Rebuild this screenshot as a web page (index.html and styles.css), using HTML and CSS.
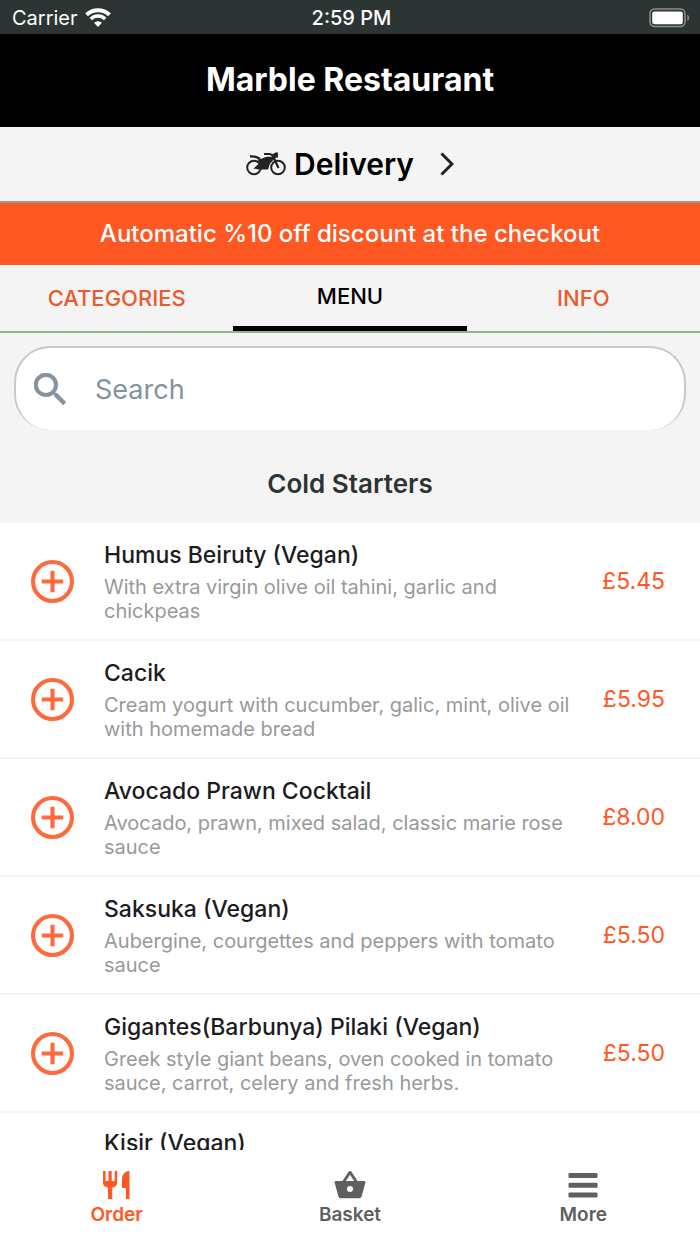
FILE: index.html
```html
<!DOCTYPE html>
<html lang="en">
<head>
<meta charset="utf-8">
<meta name="viewport" content="width=device-width, initial-scale=1">
<title>Marble Restaurant</title>
<link rel="stylesheet" href="styles.css">
</head>
<body>
<div class="app">
  <div class="status">
    <div class="status-left">
      <span>Carrier</span>
      <svg class="wifi" viewBox="0 0 26 19" aria-hidden="true">
        <path d="M1.5 6.8a16.500 16.500 0 0 1 23 0" fill="none" stroke="#fff" stroke-width="4"/>
        <path d="M5.800 11a10.300 10.300 0 0 1 14.400 0" fill="none" stroke="#fff" stroke-width="3.400"/>
        <path d="M13 19l-4-4.200a5.800 5.800 0 0 1 8 0z" fill="#fff"/>
      </svg>
    </div>
    <span class="status-time">2:59 PM</span>
    <div class="status-right">
      <svg class="battery" viewBox="0 0 42 20" aria-hidden="true">
        <rect x="1" y="1" width="35" height="17.500" rx="4.500" fill="none" stroke="#89908e" stroke-width="1.500"/>
        <rect x="3.200" y="3.400" width="30.600" height="12.800" rx="2.200" fill="#fff"/>
        <path d="M38.300 6.800c2.600 1 2.600 5 0 6z" fill="#89908e"/>
      </svg>
    </div>
  </div>
  <header class="header"><h1>Marble Restaurant</h1></header>
  <button class="delivery" type="button">
    <svg class="bike" viewBox="0 0 40 24" aria-hidden="true">
      <g fill="none" stroke="#222" stroke-width="2">
        <circle cx="8" cy="15.500" r="6.800"/><circle cx="32" cy="15.500" r="6.800"/>
        <path d="M18 2h5c2.500 0 3.500 1 4.500 3l5 11" stroke-width="2.200"/>
        <path d="M4 4.500c4-.5 7 .3 10 2.500" stroke-width="2.400"/>
      </g>
      <path d="M7.500 16.500l6-5.500-2-3.500c3.500 0 4.500-1.500 7.500-2.300 3-.6 5-.3 8-.2l1 2.500-4 4-2 6H13zM26 2.500l3.500-2H32v5l-4 .5z" fill="#222"/>
    </svg>
    <span>Delivery</span>
    <svg class="chevron" viewBox="0 0 14 24" aria-hidden="true"><path d="M1.500 1.500L12 12 1.500 22.500" fill="none" stroke="#222" stroke-width="3"/></svg>
  </button>
  <p class="promo">Automatic %10 off discount at the checkout</p>
  <nav class="tabs">
    <button class="tab" type="button">CATEGORIES</button>
    <button class="tab tab-active" type="button">MENU</button>
    <button class="tab" type="button">INFO</button>
  </nav>
  <main class="content">
    <label class="search">
      <svg class="search-icon" viewBox="3 3 17.500 17.500" aria-hidden="true"><path fill="#8492a0" stroke="#8492a0" stroke-width=".3" d="M15.500 14h-.79l-.28-.27A6.470 6.470 0 0 0 16 9.500 6.500 6.500 0 1 0 9.500 16c1.610 0 3.090-.59 4.230-1.570l.27.28v.79l5 4.990L20.490 19l-4.990-5zm-6 0C7.010 14 5 11.990 5 9.500S7.010 5 9.500 5 14 7.010 14 9.500 11.990 14 9.500 14z"/></svg>
      <input class="search-input" type="text" placeholder="Search" aria-label="Search">
    </label>
    <h2 class="section-title">Cold Starters</h2>
    <ul class="menu">
      <li class="item">
        <button class="add" type="button" aria-label="Add Humus Beiruty"><svg viewBox="0 0 42 42"><circle cx="21" cy="21" r="19"/><path d="M21 10.500v21M10.500 21h21"/></svg></button>
        <div class="info"><h3>Humus Beiruty (Vegan)</h3><p>With extra virgin olive oil tahini, garlic and chickpeas</p></div>
        <span class="price">£5.45</span>
      </li>
      <li class="item">
        <button class="add" type="button" aria-label="Add Cacik"><svg viewBox="0 0 42 42"><circle cx="21" cy="21" r="19"/><path d="M21 10.500v21M10.500 21h21"/></svg></button>
        <div class="info"><h3>Cacik</h3><p>Cream yogurt with cucumber, galic, mint, olive oil with homemade bread</p></div>
        <span class="price">£5.95</span>
      </li>
      <li class="item">
        <button class="add" type="button" aria-label="Add Avocado Prawn Cocktail"><svg viewBox="0 0 42 42"><circle cx="21" cy="21" r="19"/><path d="M21 10.500v21M10.500 21h21"/></svg></button>
        <div class="info"><h3>Avocado Prawn Cocktail</h3><p>Avocado, prawn, mixed salad, classic marie rose sauce</p></div>
        <span class="price">£8.00</span>
      </li>
      <li class="item">
        <button class="add" type="button" aria-label="Add Saksuka"><svg viewBox="0 0 42 42"><circle cx="21" cy="21" r="19"/><path d="M21 10.500v21M10.500 21h21"/></svg></button>
        <div class="info"><h3>Saksuka (Vegan)</h3><p>Aubergine, courgettes and peppers with tomato sauce</p></div>
        <span class="price">£5.50</span>
      </li>
      <li class="item">
        <button class="add" type="button" aria-label="Add Gigantes Pilaki"><svg viewBox="0 0 42 42"><circle cx="21" cy="21" r="19"/><path d="M21 10.500v21M10.500 21h21"/></svg></button>
        <div class="info"><h3>Gigantes(Barbunya) Pilaki (Vegan)</h3><p>Greek style giant beans, oven cooked in tomato sauce, carrot, celery and fresh herbs.</p></div>
        <span class="price">£5.50</span>
      </li>
      <li class="item">
        <div class="info info-only"><h3>Kisir (Vegan)</h3></div>
      </li>
    </ul>
  </main>
  <nav class="bottom">
    <a class="nav-item nav-active" href="#order">
      <svg viewBox="0 0 32 30" aria-hidden="true"><path d="M2 1h2.600v10h2.900V1h3.200v10h2.900V1h2.600v11.500c0 2.800-1.800 4.600-5 5.200V29H7V17.700c-3.200-.6-5-2.400-5-5.200zM28.500 29H25V18h-4V9c0-4.500 3.500-8 7.500-8z"/></svg>
      <span>Order</span>
    </a>
    <a class="nav-item" href="#basket">
      <svg viewBox="0 0 32 30" aria-hidden="true"><path fill-rule="evenodd" d="M16 1c.6 0 1.100.3 1.500.8L23.500 11H30c1 0 1.600.7 1.400 1.600L27.700 26c-.4 1.500-1.200 2.200-2.700 2.200H7c-1.500 0-2.300-.7-2.700-2.200L.6 12.600C.4 11.700 1 11 2 11h6.500l6-9.200c.4-.5.9-.8 1.500-.8zm0 3.800L11.800 11h8.400zM16 16a3 3 0 1 0 0 6 3 3 0 0 0 0-6z"/></svg>
      <span>Basket</span>
    </a>
    <a class="nav-item" href="#more">
      <svg viewBox="0 0 32 30" aria-hidden="true"><rect x="1.500" y="3" width="29" height="5" rx="1.200"/><rect x="1.500" y="12.700" width="29" height="5" rx="1.200"/><rect x="1.500" y="22.400" width="29" height="5" rx="1.200"/></svg>
      <span>More</span>
    </a>
  </nav>
</div>
</body>
</html>
```
FILE: styles.css
```css
* { box-sizing: border-box; }
body { margin: 0; font-family: Inter, "Liberation Sans", sans-serif; color: #1c1c1e; }
h1, h2, h3, p, ul { margin: 0; padding: 0; }
button { font-family: inherit; border: 0; background: none; padding: 0; cursor: pointer; }
.app { display: flex; flex-direction: column; height: 100vh; background: #f4f4f4; }
.status { display: grid; grid-template-columns: 1fr auto 1fr; align-items: center; padding: 1px 9px 0 12px; height: 34px; flex: none; background: #2d3434; color: #fff; font-size: 20px; }
.status-left { display: flex; align-items: center; gap: 7px; }
.status-time { font-weight: 500; }
.status-right { display: flex; justify-content: flex-end; }
.wifi { width: 26px; height: 19px; }
.battery { width: 42px; height: 20px; }
.header { flex: none; padding: 26px 16px 27px; background: #000; color: #fff; text-align: center; }
.header h1 { font-size: 32px; line-height: 40px; font-weight: 700; }
.delivery { flex: none; display: flex; align-items: center; justify-content: center; gap: 8px; height: 76px; border-bottom: 2px solid #999; font-size: 30px; font-weight: 600; color: #000; }
.bike { width: 40px; height: 24px; }
.chevron { width: 14px; height: 24px; margin-left: 18px; }
.promo { flex: none; padding: 15px 16px; background: #ff5823; color: #fff; font-size: 24px; line-height: 32px; font-weight: 500; text-align: center; }
.tabs { flex: none; display: grid; grid-template-columns: repeat(3, 1fr); height: 68px; border-bottom: 2px solid #8db87e; }
.tab { color: #e95b2b; font-size: 22px; font-weight: 500; }
.tab-active { color: #000; border-bottom: 5px solid #000; }
.content { flex: 1; min-height: 0; overflow: hidden; }
.search { display: flex; align-items: center; gap: 29px; height: 84px; margin: 13px 14px 0; padding: 0 18px; border: 2px solid #c9c9c9; border-bottom: 0; border-radius: 36px; background: #fff; }
.search-icon { width: 32px; height: 32px; flex: none; }
.search-input { flex: 1; min-width: 0; border: 0; outline: 0; padding: 0; background: none; font-family: inherit; font-size: 27px; color: #1c1c1e; }
.search-input::placeholder { color: #8492a0; opacity: 1; }
.section-title { padding: 36px 16px 21px; font-size: 26px; line-height: 36px; font-weight: 600; text-align: center; color: #2d3434; }
.menu { list-style: none; background: #fff; }
.item { display: flex; align-items: center; height: 118px; padding: 0 35px 0 31px; border-bottom: 2px solid #f5f5f5; }
.add { flex: none; width: 43px; height: 43px; margin-right: 30px; }
.add svg { display: block; width: 43px; height: 43px; fill: none; stroke: #ff6a3c; stroke-width: 4; }
.info { flex: 1; min-width: 0; padding-right: 24px; }
.info h3 { font-size: 23px; line-height: 32px; font-weight: 500; }
.info p { font-size: 20px; line-height: 24px; margin-top: 4px; color: #999; }
.info-only { align-self: flex-start; margin-left: 73px; padding-top: 14px; }
.price { font-size: 23px; color: #ff5823; }
.bottom { flex: none; display: grid; grid-template-columns: repeat(3, 1fr); height: 94px; padding-top: 20px; background: #fff; }
.nav-item { display: flex; flex-direction: column; align-items: center; gap: 3px; color: #5f5f5f; font-size: 19px; line-height: 24px; font-weight: 600; text-decoration: none; }
.nav-item svg { width: 32px; height: 30px; fill: currentColor; }
.nav-active { color: #ff5823; }
```
